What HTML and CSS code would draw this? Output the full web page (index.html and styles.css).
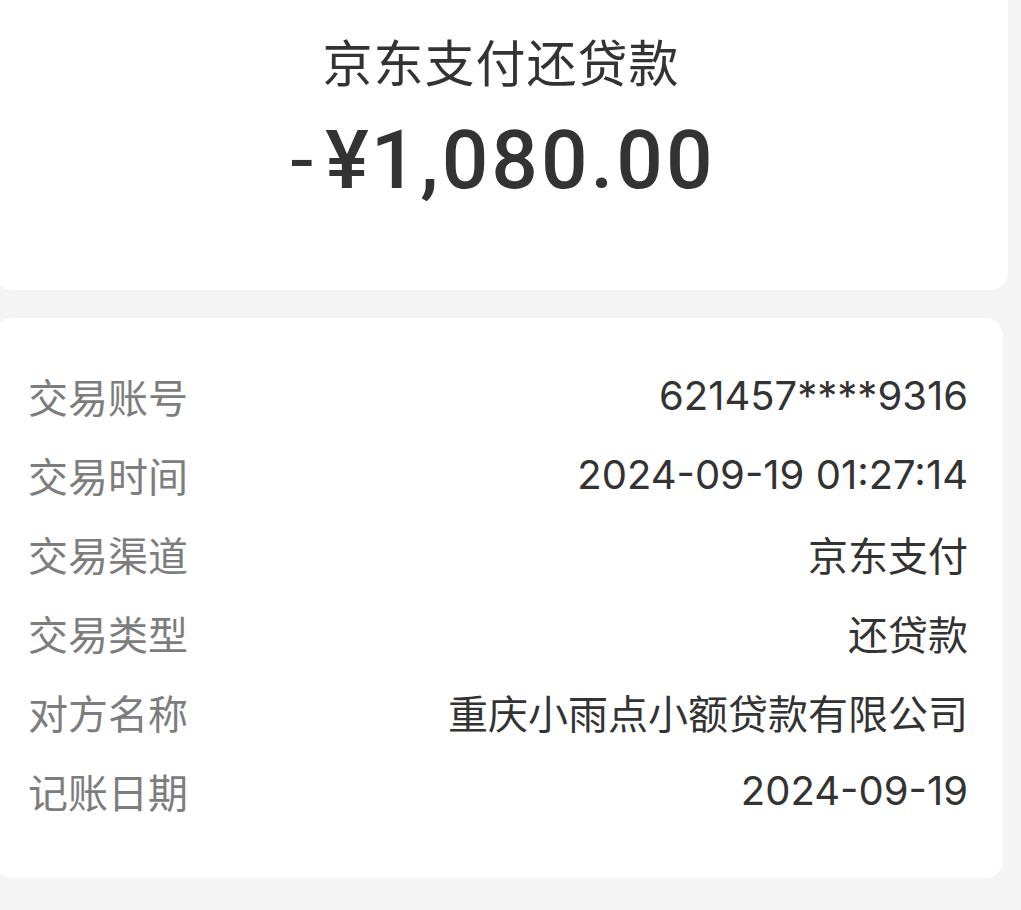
FILE: index.html
```html
<!DOCTYPE html>
<html lang="zh-CN">
<head>
<meta charset="utf-8">
<title>京东支付还贷款</title>
<link rel="stylesheet" href="styles.css">
</head>
<body>
<div class="page">
  <section class="card summary">
    <div class="title">京东支付还贷款</div>
    <div class="amount"><span class="minus">-</span><span class="yen">¥</span>1,080.00</div>
  </section>
  <section class="card details">
    <div class="row"><span class="label">交易账号</span><span class="value">621457****9316</span></div>
    <div class="row"><span class="label">交易时间</span><span class="value">2024-09-19 01:27:14</span></div>
    <div class="row"><span class="label">交易渠道</span><span class="value">京东支付</span></div>
    <div class="row"><span class="label">交易类型</span><span class="value">还贷款</span></div>
    <div class="row"><span class="label">对方名称</span><span class="value">重庆小雨点小额贷款有限公司</span></div>
    <div class="row"><span class="label">记账日期</span><span class="value">2024-09-19</span></div>
  </section>
</div>
</body>
</html>
```

FILE: styles.css
```css
html, body {
  margin: 0;
  padding: 0;
  background: #f4f4f4;
}
body {
  font-family: "Noto Sans CJK SC", "Noto Sans", sans-serif;
  color: #333333;
  overflow: hidden;
}
.page {
  display: flex;
  flex-direction: column;
  gap: 28px;
  margin-left: -6px;
  width: 1014px;
}
.card {
  background: #ffffff;
  border-radius: 18px;
}
.summary {
  margin-top: -20px;
  height: 310px;
  box-sizing: border-box;
  padding-top: 46px;
  display: flex;
  flex-direction: column;
  align-items: center;
}
.title {
  font-size: 50px;
  line-height: 68px;
  color: #333333;
  letter-spacing: 1px;
}
.amount {
  margin-top: 18px;
  padding-left: 4px;
  font-family: Roboto, "Noto Sans", sans-serif;
  font-weight: 500;
  font-size: 82px;
  line-height: 96px;
  letter-spacing: 3px;
  color: #333333;
  display: flex;
  align-items: baseline;
}
.minus {
  font-weight: 400;
  margin-right: 12px;
  letter-spacing: 0;
}
.yen {
  letter-spacing: 2px;
}
.details {
  width: 1009px;
  box-sizing: border-box;
  padding: 38px 35px 48px 34px;
  display: flex;
  flex-direction: column;
}
.row {
  height: 79px;
  display: flex;
  align-items: center;
  justify-content: space-between;
  font-size: 40px;
}
.label {
  color: #7d7d7d;
}
.value {
  font-family: Inter, "Noto Sans CJK SC", sans-serif;
  color: #333333;
}
```
